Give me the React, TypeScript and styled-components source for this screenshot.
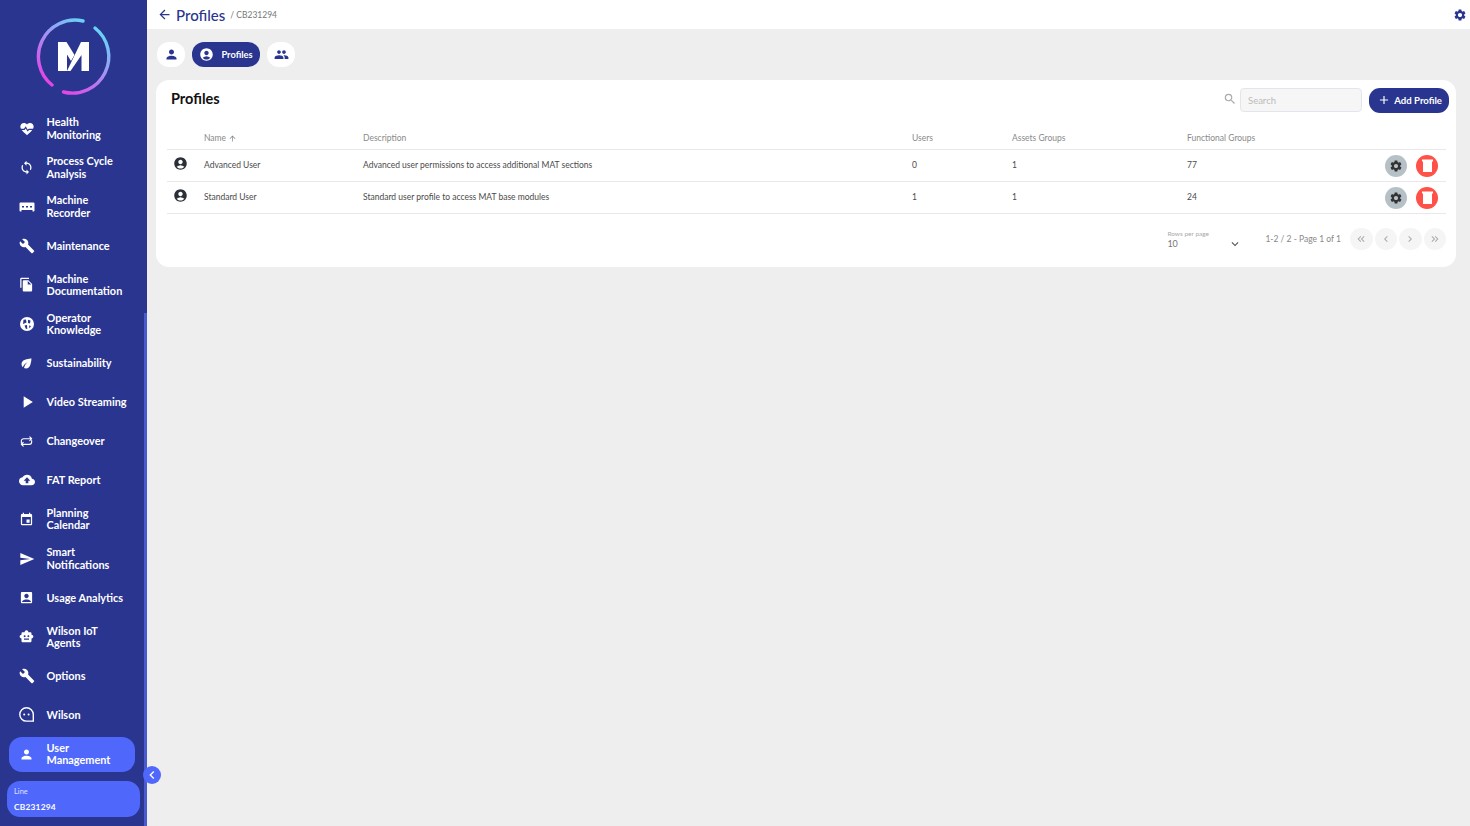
import React from "react";
import styled, { createGlobalStyle } from "styled-components";
import {
  MdSync, MdBuild, MdFileCopy, MdEco, MdPlayArrow,
  MdBackup, MdEvent, MdSend, MdAccountBox, MdSmartToy, MdPerson, MdAccountCircle, MdPeople, MdSettings, MdSearch,
  MdAdd, MdArrowBack, MdArrowUpward, MdKeyboardArrowDown, MdKeyboardDoubleArrowLeft, MdKeyboardDoubleArrowRight,
  MdChevronLeft, MdChevronRight,
} from "react-icons/md";

const Global = createGlobalStyle`
  html, body { margin: 0; padding: 0; height: 100%; overflow: hidden; }
  body { font-family: "Lato", "Noto Sans", sans-serif; background: #eeeeee; }
  #root { height: 100%; }
  * { box-sizing: border-box; }
`;

const Page = styled.div`display: flex; height: 826px; width: 1470px; position: relative;`;
const Sidebar = styled.aside`
  width: 147px; flex: none; background: #29358f; position: relative; display: flex; flex-direction: column;
`;
const LogoWrap = styled.div`height: 111px; padding: 17px 0 0 34px; flex: none;`;
const Nav = styled.nav`display: flex; flex-direction: column; gap: 4.1px; padding: 0 12px 0 9px;`;
const NavItem = styled.div<{ $active?: boolean }>`
  height: 35px; display: flex; align-items: center; border-radius: 13px; color: #fff;
  background: ${(p) => (p.$active ? "#4f68fb" : "transparent")};
  font-size: 10.9px; font-weight: 700; line-height: 12.2px; padding-left: 9px;
`;
const NavIcon = styled.span`width: 28.5px; flex: none; display: flex; justify-content: center; padding-right: 11px; svg { display: block; flex: none; }`;
const Scrollbar = styled.div`position: absolute; right: 0; top: 313px; bottom: 0; width: 3px; background: #4a5bd0;`;
const LineCard = styled.div`
  position: absolute; left: 7px; top: 781px; width: 133px; height: 36px; border-radius: 13px; background: #4f68fb;
  color: #fff; padding: 6px 7px 4px; display: flex; flex-direction: column; justify-content: space-between;
`;
const LineLabel = styled.span`font-size: 7.5px; opacity: .8; line-height: 9px;`;
const LineValue = styled.span`font-size: 8.4px; font-weight: 700; line-height: 11px; letter-spacing: .2px;`;
const Collapse = styled.div`
  position: absolute; left: 143px; top: 766px; width: 18px; height: 18px; border-radius: 50%; background: #4f68fb;
  color: #fff; display: flex; align-items: center; justify-content: center; z-index: 2;
`;
const Main = styled.main`flex: 1; min-width: 0; display: flex; flex-direction: column;`;
const TopBar = styled.header`
  height: 29px; background: #fff; display: flex; align-items: center; padding: 0 3px 0 10px; color: #29358f; flex: none;
`;
const TopTitle = styled.span`font-size: 15px; font-weight: 500; margin-left: 4px; color: #29358f;`;
const TopSub = styled.span`font-size: 8.5px; color: #777; margin-left: 5px; flex: 1;`;
const Tabs = styled.div`display: flex; gap: 7px; padding: 13px 10px 13px; flex: none;`;
const Tab = styled.div<{ $active?: boolean }>`
  height: 25px; border-radius: 12px; display: flex; align-items: center; justify-content: center; gap: 7px;
  width: ${(p) => (p.$active ? "68px" : "28px")};
  background: ${(p) => (p.$active ? "#29358f" : "#fff")}; color: ${(p) => (p.$active ? "#fff" : "#29358f")};
  font-size: 9.3px; font-weight: 700;
`;
const Card = styled.section`
  margin: 0 14px 0 9px; height: 187px; background: #fff; border-radius: 13px; padding: 8px 7px 0 11px; display: flex; flex-direction: column;
`;
const CardHead = styled.div`display: flex; align-items: center; height: 24px; padding-left: 4px;`;
const CardTitle = styled.h2`margin: 0; font-size: 14.5px; font-weight: 700; color: #111; flex: 1; position: relative; top: -2px;`;
const SearchIcon = styled.span`color: #aaa; display: flex; margin-right: 3px; position: relative; top: -1px;`;
const SearchField = styled.div`
  width: 122px; height: 24px; background: #f6f6f6; border: 1px solid #e2e6ec; border-radius: 4px; color: #bbb;
  font-size: 9.5px; padding-left: 7px; display: flex; align-items: center; margin-right: 7px;
`;
const AddButton = styled.div`
  width: 80px; height: 25px; border-radius: 11px; background: #29358f; color: #fff; display: flex; align-items: center;
  justify-content: flex-end; padding-right: 7px; gap: 3px; font-size: 9.6px; font-weight: 700;
`;
const Table = styled.div`margin: 0 3px 0 0; padding-top: 15px;`;
const Row = styled.div<{ $head?: boolean }>`
  display: grid; grid-template-columns: 37px 159px 549px 100px 175px 1fr; align-items: center; font-size: 8.5px;
  height: ${(p) => (p.$head ? "23px" : "32px")}; border-bottom: 1px solid #e8e8e8;
  color: ${(p) => (p.$head ? "#8a8a8a" : "#4a4a4a")}; padding-bottom: ${(p) => (p.$head ? "0" : "2px")};
`;
const RowIcon = styled.span`display: flex; padding-left: 6px; color: #2a2f38; position: relative; top: -1px;`;
const HeadName = styled.span`display: flex; align-items: center; gap: 2px;`;
const GroupsCell = styled.div`display: flex; align-items: center; gap: 9px; padding-right: 8px;`;
const GroupsValue = styled.span`flex: 1;`;
const RoundButton = styled.div<{ $danger?: boolean }>`
  width: 22px; height: 22px; border-radius: 50%; background: ${(p) => (p.$danger ? "#ff5147" : "#b6c1c7")};
  color: #333; display: flex; align-items: center; justify-content: center; position: relative; top: 1px;
`;
const Pager = styled.div`display: flex; align-items: center; justify-content: flex-end; height: 50px; color: #888;`;
const RowsSelect = styled.div`width: 73px; position: relative; height: 24px; margin-right: 25px; color: #777;`;
const RowsLabel = styled.div`font-size: 6.5px; color: #aaa; line-height: 8px; margin-top: 3px;`;
const RowsValue = styled.div`font-size: 9px; line-height: 12px;`;
const RowsChevron = styled.span`position: absolute; right: -2px; top: 10px; color: #555; display: flex;`;
const PageText = styled.span`font-size: 8.5px; margin-right: 9px;`;
const PageButtons = styled.div`display: flex; gap: 2px;`;
const PageButton = styled.div`
  width: 22.5px; height: 22.5px; border-radius: 50%; background: #f5f5f5; color: #aaa; display: flex; align-items: center; justify-content: center;
`;

const Logo = () => (
  <svg width="80" height="80" viewBox="34 17 80 80" fill="none">
    <defs>
      <linearGradient id="lg" x1="97" y1="24" x2="52" y2="88" gradientUnits="userSpaceOnUse">
        <stop offset="0" stopColor="#5fdcf8" />
        <stop offset="0.5" stopColor="#a98df2" />
        <stop offset="1" stopColor="#e83fe6" />
      </linearGradient>
    </defs>
    <path d="M83 21A36.500 36.500 0 0 0 52 85" stroke="url(#lg)" strokeWidth="3.4" strokeLinecap="round" />
    <path d="M95 28A36.500 36.500 0 0 1 63.500 92" stroke="url(#lg)" strokeWidth="3.4" strokeLinecap="round" />
    <path d="M58 71V42h8.500l8 13-3.500 6L67 54.500V71z" fill="#fff" />
    <path d="M89 42v29h-7.500V55L70.500 71H67L81 42z" fill="#fff" />
  </svg>
);

const HeartPulse = () => (
  <svg width="16" height="16" viewBox="0 0 24 24">
    <path fill="#fff" d="M12 21.350l-1.450-1.320C5.400 15.360 2 12.280 2 8.500 2 5.420 4.420 3 7.500 3c1.740 0 3.410.81 4.500 2.090C13.090 3.810 14.760 3 16.500 3 19.580 3 22 5.420 22 8.500c0 3.780-3.400 6.860-8.550 11.540L12 21.350z" />
    <path fill="none" stroke="#29358f" strokeWidth="1.700" d="M1 12.500h7l2-3 3 5 2-2h8" />
  </svg>
);
const GlobeIcon = () => (
  <svg width="16" height="16" viewBox="0 0 16 16">
    <circle cx="8" cy="8" r="7" fill="#fff" />
    <path fill="#29358f" d="M4.500 3.800 7 3.500l.5 3-3.500 1.500zM9 3.800l2.500.7L11 7.500 9 7zM5.500 9.500 8 9l.3 4-1.500-.3zM10 9.500l2 .5-1.500 2.500z" />
  </svg>
);
const LoopIcon = () => (
  <svg width="15" height="15" viewBox="0 0 16 16" fill="none" stroke="#fff" strokeWidth="1.200" strokeLinecap="round" strokeLinejoin="round">
    <path d="M2.500 9.500V7.500A2.500 2.500 0 0 1 5 5h8.500M11.500 3l2 2-2 2M13.500 7v1.500A2.500 2.500 0 0 1 11 11H2.500M4.500 9l-2 2 2 2" />
  </svg>
);
const WilsonIcon = () => (
  <svg width="17" height="17" viewBox="0 0 17 17" fill="none">
    <path d="M8.500 1.700a6.700 6.700 0 1 0 0 13.400h6.800V8.400a6.800 6.800 0 0 0-6.800-6.700z" stroke="#fff" strokeWidth="1.400" />
    <circle cx="6.200" cy="8.400" r="1" fill="#fff" />
    <circle cx="10.600" cy="8.400" r="1" fill="#fff" />
  </svg>
);
const RecorderIcon = () => (
  <svg width="16" height="16" viewBox="0 0 16 16">
    <path fillRule="evenodd" fill="#fff" d="M1.500 3.500h13a1 1 0 0 1 1 1v7a1 1 0 0 1-1 1h-1v-1.500h-11V12.500h-1a1 1 0 0 1-1-1v-7a1 1 0 0 1 1-1zM3 7v1.500h2V7zm4 0v1.500h2V7zm4 0v1.500h2V7z" />
  </svg>
);
const TrashIcon = () => (
  <svg width="11" height="13" viewBox="0 0 11 13"><path fill="#fff" d="M0 .5h11v2h-1V13H1V2.500H0z" /></svg>
);

const items: { icon: React.ReactNode; label: React.ReactNode; active?: boolean }[] = [
  { icon: <HeartPulse />, label: <>Health<br />Monitoring</> },
  { icon: <MdSync size={15} />, label: <>Process Cycle<br />Analysis</> },
  { icon: <RecorderIcon />, label: <>Machine<br />Recorder</> },
  { icon: <MdBuild size={16} />, label: "Maintenance" },
  { icon: <MdFileCopy size={15} />, label: <>Machine<br />Documentation</> },
  { icon: <GlobeIcon />, label: <>Operator<br />Knowledge</> },
  { icon: <MdEco size={15} />, label: "Sustainability" },
  { icon: <MdPlayArrow size={20} />, label: "Video Streaming" },
  { icon: <LoopIcon />, label: "Changeover" },
  { icon: <MdBackup size={16} />, label: "FAT Report" },
  { icon: <MdEvent size={15} />, label: <>Planning<br />Calendar</> },
  { icon: <MdSend size={16} />, label: <>Smart<br />Notifications</> },
  { icon: <MdAccountBox size={15} />, label: "Usage Analytics" },
  { icon: <MdSmartToy size={15} />, label: <>Wilson IoT<br />Agents</> },
  { icon: <MdBuild size={16} />, label: "Options" },
  { icon: <WilsonIcon />, label: "Wilson" },
  { icon: <MdPerson size={15} />, label: <>User<br />Management</>, active: true },
];

const rows = [
  { name: "Advanced User", desc: "Advanced user permissions to access additional MAT sections", users: 0, assets: 1, groups: 77 },
  { name: "Standard User", desc: "Standard user profile to access MAT base modules", users: 1, assets: 1, groups: 24 },
];

export default function App() {
  return (
    <Page>
      <Global />
      <Sidebar>
        <LogoWrap><Logo /></LogoWrap>
        <Nav>
          {items.map((it, i) => (
            <NavItem key={i} $active={it.active}>
              <NavIcon>{it.icon}</NavIcon>
              <span>{it.label}</span>
            </NavItem>
          ))}
        </Nav>
        <Scrollbar />
        <LineCard>
          <LineLabel>Line</LineLabel>
          <LineValue>CB231294</LineValue>
        </LineCard>
      </Sidebar>
      <Collapse><MdChevronLeft size={16} /></Collapse>
      <Main>
        <TopBar>
          <MdArrowBack size={15} />
          <TopTitle>Profiles</TopTitle>
          <TopSub>/ CB231294</TopSub>
          <MdSettings size={14} />
        </TopBar>
        <Tabs>
          <Tab><MdPerson size={15} /></Tab>
          <Tab $active><MdAccountCircle size={15} />Profiles</Tab>
          <Tab><MdPeople size={15} /></Tab>
        </Tabs>
        <Card>
          <CardHead>
            <CardTitle>Profiles</CardTitle>
            <SearchIcon><MdSearch size={14} /></SearchIcon>
            <SearchField>Search</SearchField>
            <AddButton><MdAdd size={14} />Add Profile</AddButton>
          </CardHead>
          <Table>
            <Row $head>
              <span />
              <HeadName>Name <MdArrowUpward size={9} /></HeadName>
              <span>Description</span>
              <span>Users</span>
              <span>Assets Groups</span>
              <span>Functional Groups</span>
            </Row>
            {rows.map((r) => (
              <Row key={r.name}>
                <RowIcon><MdAccountCircle size={15} /></RowIcon>
                <span>{r.name}</span>
                <span>{r.desc}</span>
                <span>{r.users}</span>
                <span>{r.assets}</span>
                <GroupsCell>
                  <GroupsValue>{r.groups}</GroupsValue>
                  <RoundButton><MdSettings size={14} /></RoundButton>
                  <RoundButton $danger><TrashIcon /></RoundButton>
                </GroupsCell>
              </Row>
            ))}
            <Pager>
              <RowsSelect>
                <RowsLabel>Rows per page</RowsLabel>
                <RowsValue>10</RowsValue>
                <RowsChevron><MdKeyboardArrowDown size={14} /></RowsChevron>
              </RowsSelect>
              <PageText>1-2 / 2 - Page 1 of 1</PageText>
              <PageButtons>
                <PageButton><MdKeyboardDoubleArrowLeft size={12} /></PageButton>
                <PageButton><MdChevronLeft size={12} /></PageButton>
                <PageButton><MdChevronRight size={12} /></PageButton>
                <PageButton><MdKeyboardDoubleArrowRight size={12} /></PageButton>
              </PageButtons>
            </Pager>
          </Table>
        </Card>
      </Main>
    </Page>
  );
}
